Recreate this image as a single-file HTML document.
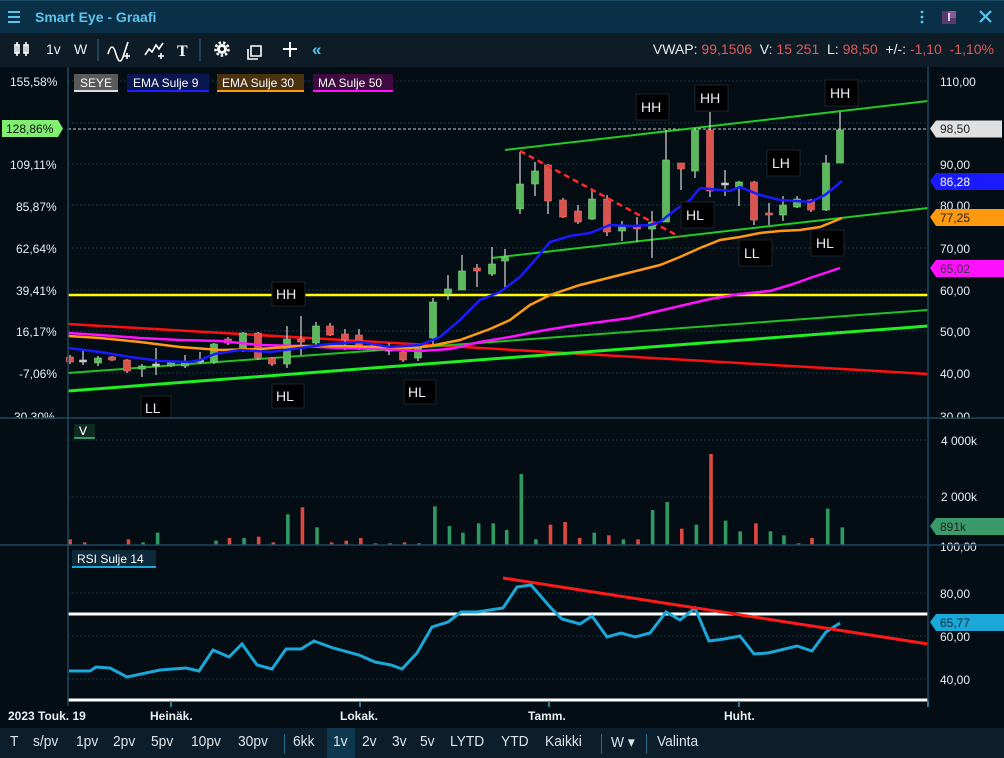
<!DOCTYPE html>
<html><head><meta charset="utf-8">
<style>
*{margin:0;padding:0;box-sizing:border-box}
body{width:1004px;height:758px;background:#050d14;font-family:"Liberation Sans",sans-serif;overflow:hidden;position:relative;color:#dfe6ea}
.title{position:absolute;left:0;top:0;width:1004px;height:33px;background:#0a3048;border-top:1px solid #1a4a63}
.title .t{position:absolute;left:35px;top:8px;font-size:14px;font-weight:bold;color:#5cc3ee}
.tool{position:absolute;left:0;top:33px;width:1004px;height:34px;background:#0d1c27}
.tb{position:absolute;top:8px;font-size:14px;color:#e8eef2}
.bot{position:absolute;left:0;top:728px;width:1004px;height:30px;background:#0c1e2b}
.bot span{position:absolute;top:5px;font-size:15px;color:#dde4ea;transform:scaleX(.92);transform-origin:left}
.sep{position:absolute;top:6px;width:1px;height:20px;background:#2a6a8a}
svg{position:absolute;left:0;top:0}
</style></head><body>
<div class="title">
<svg width="30" height="33"><g stroke="#5cc3ee" stroke-width="2"><line x1="8" y1="11" x2="20" y2="11"/><line x1="8" y1="16" x2="20" y2="16"/><line x1="8" y1="21" x2="20" y2="21"/></g></svg>
<div class="t">Smart Eye - Graafi</div>
<svg width="1004" height="33" style="left:0"><g fill="#5cc3ee"><circle cx="922" cy="11" r="1.4"/><circle cx="922" cy="16" r="1.4"/><circle cx="922" cy="21" r="1.4"/></g>
<rect x="942" y="10" width="14" height="13" fill="#5a3a6a"/><rect x="948" y="10" width="8" height="7" fill="#8a5a9a"/><line x1="949" y1="12" x2="949" y2="20" stroke="#fff" stroke-width="1.5"/>
<g stroke="#5cc3ee" stroke-width="2.2"><line x1="980" y1="10" x2="991" y2="21"/><line x1="991" y1="10" x2="980" y2="21"/></g></svg>
</div>
<div class="tool">
<svg width="340" height="34"><g stroke="#fff" stroke-width="1.6" fill="none"><rect x="15" y="12" width="4" height="8"/><line x1="17" y1="9" x2="17" y2="23"/><rect x="24" y="12" width="4" height="8"/><line x1="26" y1="9" x2="26" y2="23"/>
<path d="M108 21 q4-14 8 0 t8 0 q2-6 4-12"/><path d="M145 22 l4-6 3 3 4-7 3 4 4-6"/><path d="M161 20 v6 M158 23 h6 M127 20 v6 M124 23 h6"/>
<path d="M251 13 h10 v10 h-10 z M248 16 v10 h10"/><path d="M290 9 v15 M283 16 h14" stroke-width="2"/></g>
<text x="177" y="23" fill="#fff" font-size="16" font-weight="bold" font-family="Liberation Serif">T</text>
<circle cx="222" cy="16" r="5" fill="#fff"/><circle cx="222" cy="16" r="2" fill="#0d1c27"/><circle cx="222" cy="16" r="6.5" fill="none" stroke="#fff" stroke-width="2.5" stroke-dasharray="2.5 2"/>
<text x="312" y="22" fill="#5cc3ee" font-size="17" font-weight="bold">«</text>
<line x1="98" y1="6" x2="98" y2="28" stroke="#2a6a8a"/><line x1="200" y1="6" x2="200" y2="28" stroke="#2a6a8a"/></svg>
<span class="tb" style="left:46px">1v</span><span class="tb" style="left:74px">W</span>
<div class="tb" style="right:10px;font-size:14px">VWAP: <span style="color:#e05a5a">99,1506</span>&nbsp; V: <span style="color:#e05a5a">15 251</span>&nbsp; L: <span style="color:#e05a5a">98,50</span>&nbsp; +/-: <span style="color:#e05a5a">-1,10 &nbsp;-1,10%</span></div>
</div>

<svg id="ch" width="1004" height="758" style="top:0" font-family="Liberation Sans" font-size="12">
<g stroke="#163444" stroke-dasharray="2 2">
<line x1="68" x2="928" y1="81" y2="81"/><line x1="68" x2="928" y1="123" y2="123"/><line x1="68" x2="928" y1="164" y2="164"/><line x1="68" x2="928" y1="205" y2="205"/><line x1="68" x2="928" y1="248" y2="248"/><line x1="68" x2="928" y1="290" y2="290"/><line x1="68" x2="928" y1="331" y2="331"/><line x1="68" x2="928" y1="373" y2="373"/><line x1="68" x2="928" y1="440" y2="440"/><line x1="68" x2="928" y1="497" y2="497"/><line x1="68" x2="928" y1="593" y2="593"/><line x1="68" x2="928" y1="636" y2="636"/><line x1="68" x2="928" y1="679" y2="679"/>
</g>
<line x1="68" y1="129" x2="928" y2="129" stroke="#ccc" stroke-dasharray="3 2"/>
<g id="vol"></g>
<line x1="68" y1="295" x2="928" y2="295" stroke="#ffff00" stroke-width="2.5"/>
<line x1="68" y1="324" x2="928" y2="374" stroke="#ff1010" stroke-width="2.5"/>
<line x1="68" y1="373" x2="928" y2="310" stroke="#22c022" stroke-width="2"/>
<line x1="68" y1="391" x2="928" y2="326" stroke="#22ee22" stroke-width="3"/>
<line x1="505" y1="150" x2="928" y2="101" stroke="#22cc22" stroke-width="2"/>
<line x1="492" y1="258" x2="928" y2="208" stroke="#22cc22" stroke-width="2"/>
<g id="cd"></g>
<polyline fill="none" stroke="#ff2a2a" stroke-width="2.5" stroke-dasharray="6 4" points="520,151 680,237"/>
<polyline fill="none" stroke="#ff10ff" stroke-width="2.5" points="68,333 100,335 140,338 180,340 220,341 260,345 300,346 340,348 380,349 420,351 450,349 480,342 510,337 540,331 570,326 600,322 630,318 650,313 680,306 710,299 740,294 770,291 790,285 810,278 840,268"/>
<polyline fill="none" stroke="#ff9a10" stroke-width="2.5" points="68,336 100,338 140,342 180,347 220,350 260,349 300,346 340,346 380,347 410,348 430,346 460,340 490,329 510,320 530,305 550,295 580,285 600,280 620,275 640,270 660,265 680,257 700,248 720,240 740,237 760,233 780,231 800,230 820,227 842,218"/>
<polyline fill="none" stroke="#1a1aff" stroke-width="2.5" points="68,348 100,352 130,357 160,361 190,362 200,360 215,354 240,350 270,352 300,348 330,344 360,342 390,347 420,345 440,337 460,320 480,300 500,292 520,277 535,260 550,242 570,236 590,233 610,225 630,226 650,225 660,222 675,210 690,200 700,188 710,189 730,191 740,187 760,195 780,200 810,202 825,195 842,181"/>
<g fill="#000" stroke="#1c252c" font-size="14">
<rect x="636" y="94" width="33" height="26"/><rect x="695" y="85" width="33" height="26"/><rect x="825" y="80" width="33" height="26"/><rect x="767" y="150" width="33" height="26"/><rect x="681" y="202" width="33" height="26"/><rect x="739" y="240" width="33" height="26"/><rect x="811" y="230" width="33" height="26"/><rect x="272" y="282" width="33" height="24"/><rect x="141" y="396" width="30" height="24"/><rect x="272" y="384" width="32" height="24"/><rect x="404" y="380" width="32" height="24"/>
</g>
<g fill="#e8eef2" font-size="14">
<text x="641" y="112">HH</text><text x="700" y="103">HH</text><text x="830" y="98">HH</text><text x="772" y="168">LH</text><text x="686" y="220">HL</text><text x="744" y="258">LL</text><text x="816" y="248">HL</text><text x="276" y="299">HH</text><text x="145" y="413">LL</text><text x="276" y="401">HL</text><text x="408" y="397">HL</text>
</g>
<!-- legends -->
<rect x="74" y="74" width="44" height="17" fill="#5a5a5a"/><rect x="74" y="90" width="44" height="2" fill="#ddd"/><text x="80" y="87" fill="#fff">SEYE</text>
<rect x="127" y="74" width="82" height="17" fill="#0a1650"/><rect x="127" y="90" width="82" height="2" fill="#2020ff"/><text x="133" y="87" fill="#fff">EMA Sulje 9</text>
<rect x="217" y="74" width="87" height="17" fill="#4a3210"/><rect x="217" y="90" width="87" height="2" fill="#ff9a10"/><text x="222" y="87" fill="#fff">EMA Sulje 30</text>
<rect x="313" y="74" width="80" height="17" fill="#3e0a40"/><rect x="313" y="90" width="80" height="2" fill="#ff10ff"/><text x="318" y="87" fill="#fff">MA Sulje 50</text>
<rect x="74" y="422" width="21" height="16" fill="#0e2a22"/><rect x="74" y="437" width="21" height="2" fill="#3a9a6a"/><text x="79" y="435" fill="#fff">V</text>
<rect x="72" y="550" width="84" height="17" fill="#0e2a3a"/><rect x="72" y="566" width="84" height="2" fill="#1ba8d8"/><text x="77" y="563" fill="#fff">RSI Sulje 14</text>
<!-- RSI -->
<line x1="68" y1="614" x2="928" y2="614" stroke="#fff" stroke-width="3"/>
<line x1="68" y1="700" x2="928" y2="700" stroke="#fff" stroke-width="3"/>
<polyline fill="none" stroke="#1ba8d8" stroke-width="3" points="69,671 90,671 96,667 110,668 127,677 160,670 186,668 199,671 213,650 229,657 242,644 257,665 272,669 286,649 301,649 314,641 333,648 359,655 375,662 391,665 402,669 417,653 432,627 448,622 461,612 477,612 503,608 517,587 531,585 551,608 562,619 580,624 592,616 607,637 621,633 635,637 650,633 666,612 680,620 695,608 709,641 724,639 740,636 754,654 768,653 797,646 812,651 826,632 840,623"/>
<line x1="503" y1="578" x2="928" y2="644" stroke="#ff1a1a" stroke-width="3"/>
<!-- axes labels -->
<g fill="#e8eef2" font-size="12">
<text x="10" y="86">155,58%</text><text x="10" y="169">109,11%</text><text x="16" y="211">85,87%</text><text x="16" y="253">62,64%</text><text x="16" y="295">39,41%</text><text x="16" y="336">16,17%</text><text x="19" y="378">-7,06%</text><text x="10" y="421">-30,30%</text>
<text x="940" y="86">110,00</text><text x="940" y="169">90,00</text><text x="940" y="210">80,00</text><text x="940" y="253">70,00</text><text x="940" y="295">60,00</text><text x="940" y="336">50,00</text><text x="940" y="378">40,00</text><text x="940" y="421">30,00</text>
<text x="941" y="445">4 000k</text><text x="941" y="501">2 000k</text><text x="940" y="551">100,00</text><text x="940" y="598">80,00</text><text x="940" y="641">60,00</text><text x="940" y="684">40,00</text>
</g>
<rect x="0" y="419" width="1004" height="5" fill="#050d14"/>
<rect x="0" y="546" width="68" height="3" fill="#050d14"/>
<g stroke="#1d4a60" stroke-width="1.5"><line x1="68" y1="67" x2="68" y2="706"/><line x1="928" y1="67" x2="928" y2="706"/><line x1="0" y1="418" x2="1004" y2="418"/><line x1="0" y1="545" x2="1004" y2="545"/></g>
<text x="79" y="435" fill="#fff">V</text>
<!-- tags -->
<path d="M2 120 h56 l5 8.5 -5 8.5 h-56z" fill="#80ee70"/><text x="6" y="133" fill="#111">128,86%</text>
<path d="M930 128.5 l6 -8 h66 v17 h-66z" fill="#e0e0e0"/><text x="940" y="133" fill="#222">98,50</text>
<path d="M930 181 l6 -8 h68 v17 h-68z" fill="#1a1aff"/><text x="940" y="186" fill="#fff">86,28</text>
<path d="M930 217 l6 -8 h68 v17 h-68z" fill="#ff9a10"/><text x="940" y="222" fill="#222">77,25</text>
<path d="M930 268 l6 -8 h68 v17 h-68z" fill="#ff10ff"/><text x="940" y="273" fill="#333">65,02</text>
<path d="M930 526 l6 -8 h68 v17 h-68z" fill="#3a9a6a"/><text x="940" y="531" fill="#222">891k</text>
<path d="M930 622 l6 -8 h68 v17 h-68z" fill="#1ba8d8"/><text x="940" y="627" fill="#0a2a3a">65,77</text>
<!-- dates -->
<g stroke="#2a7aa0" stroke-width="2"><line x1="171" y1="701" x2="171" y2="707"/><line x1="360" y1="701" x2="360" y2="707"/><line x1="549" y1="701" x2="549" y2="707"/><line x1="739" y1="701" x2="739" y2="707"/><line x1="928" y1="701" x2="928" y2="707"/></g>
<g fill="#e8eef2" font-size="12" font-weight="bold"><text x="8" y="720">2023 Touk. 19</text><text x="150" y="720">Heinäk.</text><text x="340" y="720">Lokak.</text><text x="528" y="720">Tamm.</text><text x="724" y="720">Huht.</text></g>
</svg>

<div class="bot">
<div style="position:absolute;left:327px;top:0;width:28px;height:30px;background:#0e3850"></div>
<span style="left:10px">T</span><span style="left:33px">s/pv</span><span style="left:76px">1pv</span><span style="left:113px">2pv</span><span style="left:151px">5pv</span><span style="left:191px">10pv</span><span style="left:238px">30pv</span>
<div class="sep" style="left:284px"></div>
<span style="left:293px">6kk</span><span style="left:333px">1v</span><span style="left:362px">2v</span><span style="left:392px">3v</span><span style="left:420px">5v</span><span style="left:450px">LYTD</span><span style="left:501px">YTD</span><span style="left:545px">Kaikki</span>
<div class="sep" style="left:601px"></div><span style="left:611px">W ▾</span><div class="sep" style="left:646px"></div><span style="left:657px">Valinta</span>
</div>

<script>
var NS="http://www.w3.org/2000/svg";
function el(p,t,a){var e=document.createElementNS(NS,t);for(var k in a)e.setAttribute(k,a[k]);p.appendChild(e);}
var cd=document.getElementById("cd");
var C=[[70,357,362,355,364,'r'],[83,360,362,350,365,'w'],[98,358,363,356,366,'g'],[112,357,360,356,361,'r'],[127,360,371,359,373,'r'],[142,366,369,364,377,'g'],[156,364,366,348,375,'w'],[171,362,366,361,367,'g'],[185,363,366,355,368,'g'],[200,360,362,352,364,'w'],[214,344,362,343,364,'g'],[228,339,343,337,345,'r'],[243,333,350,332,352,'g'],[258,333,358,332,360,'r'],[272,358,364,357,366,'r'],[287,339,364,326,368,'g'],[301,339,342,316,355,'r'],[316,326,343,322,345,'g'],[330,326,335,323,336,'r'],[345,334,340,329,350,'r'],[359,335,345,329,350,'r'],[374,345,349,343,351,'r'],[389,349,351,343,355,'w'],[403,352,360,350,362,'r'],[418,348,358,346,361,'g'],[433,302,338,298,344,'g'],[448,289,294,275,300,'g'],[462,271,290,255,290,'g'],[477,268,271,264,287,'r'],[492,264,274,247,276,'g'],[505,257,261,249,287,'g'],[520,184,209,152,214,'g'],[535,171,184,162,196,'g'],[548,165,201,164,214,'r'],[563,200,217,198,218,'r'],[578,211,222,205,224,'r'],[592,199,219,189,220,'g'],[607,199,232,195,236,'r'],[622,227,231,221,241,'g'],[637,226,229,217,242,'r'],[652,222,229,211,258,'g'],[666,160,222,130,222,'g'],[681,163,169,163,190,'r'],[695,130,171,128,178,'g'],[710,130,191,112,197,'r'],[725,183,185,170,196,'w'],[739,182,187,181,206,'g'],[754,182,220,181,225,'r'],[769,213,215,203,225,'r'],[783,205,215,196,221,'g'],[797,199,207,196,208,'g'],[811,200,210,199,212,'r'],[826,163,210,155,211,'g'],[840,130,163,112,163,'g']];
C.forEach(function(c){el(cd,"line",{x1:c[0],x2:c[0],y1:c[3],y2:c[4],stroke:"#c8c8c8","stroke-width":1.3});
var col=c[5]=='g'?'#5cb85c':c[5]=='r'?'#d9534f':'#c8c8c8';var h=Math.max(c[2]-c[1],2);
el(cd,"rect",{x:c[0]-3.5,y:c[1],width:7,height:h,fill:col,stroke:c[5]=='g'?'#7fd07f':c[5]=='r'?'#f07070':'#ccc',"stroke-width":0.6});});
var V=[[18,358,'r'],[44,367,'r'],[70,378,'g'],[96,375,'r'],[122,358,'r'],[148,367,'g'],[174,338,'g'],[200,375,'g'],[226,375,'g'],[252,375,'r'],[278,362,'g'],[302,354,'r'],[328,354,'g'],[354,350,'r'],[380,367,'r'],[406,283,'g'],[432,262,'r'],[458,322,'g'],[484,367,'r'],[510,362,'r'],[536,354,'r'],[562,370,'r'],[588,370,'r'],[614,367,'r'],[640,370,'g'],[668,259,'g'],[694,318,'g'],[718,338,'g'],[746,310,'g'],[772,310,'g'],[796,330,'g'],[822,162,'g'],[848,358,'g'],[874,314,'r'],[900,306,'r'],[926,354,'r'],[952,338,'g'],[978,346,'r'],[1004,358,'g'],[1030,358,'r'],[1056,270,'g'],[1082,246,'g'],[1108,326,'r'],[1134,314,'g'],[1160,102,'r'],[1186,302,'g'],[1212,334,'g'],[1240,310,'r'],[1266,334,'g'],[1290,346,'g'],[1316,370,'g'],[1340,354,'r'],[1368,266,'g'],[1394,322,'g']];
var vg=document.getElementById("vol");
V.forEach(function(v){var x=60+v[0]*0.5612,y=420+v[1]/3;el(vg,"rect",{x:x-1.8,y:y,width:3.6,height:545-y,fill:v[2]=='g'?'#2e9a62':'#e0483e'});});
</script>
</body></html>
